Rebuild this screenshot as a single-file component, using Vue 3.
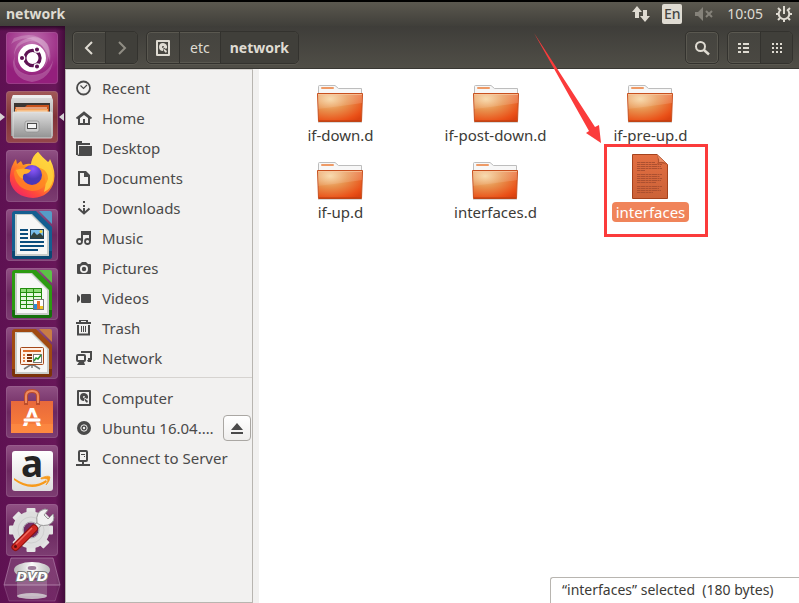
<script setup>
import { ref } from 'vue'

const selected = ref('interfaces')

const officeDoc = (edge, dark, flap, body) => `
  <path d="M9 2H27L46 21V47Q46 50 43 50H9Q6 50 6 47V5Q6 2 9 2Z" fill="${edge}"/>
  <path d="M6 42H46V47Q46 50 43 50H9Q6 50 6 47Z" fill="${dark}"/>
  <path d="M9 5H26L43 22V47H9Z" fill="#c9cdca"/>
  <path d="M11 6H25L41 22V45H11Z" fill="#f7f7f6"/>
  <path d="M26 2H30L46 18V23Z" fill="${edge}"/>
  <path d="M33 2H44Q46 2 46 4V15Z" fill="${flap}"/>${body}`

const gearTeeth = (cx, cy, r, w, h, n, fill) =>
  Array.from({ length: n }, (_, i) =>
    `<rect x="${cx - w / 2}" y="${cy - r}" width="${w}" height="${h}" rx="1" fill="${fill}" transform="rotate(${(i * 360) / n} ${cx} ${cy})"/>`
  ).join('')

const apps = [
  {
    name: 'Search your computer', kind: 'dash',
    art: `
      <path d="M5 12Q22 0 36 14Q44 25 37 37Q47 24 41 12Q30 -2 8 6Z" fill="#fff" opacity=".2"/>
      <path d="M8 25Q7 8 27 5Q47 6 44 30Q39 9 24 9Q9 12 8 25Z" fill="#fff" opacity=".22"/>
      <path d="M10 20Q4 39 23 43Q42 44 47 28Q45 47 26 50Q7 47 7 30Z" fill="#fff" opacity=".2"/>
      <circle cx="26" cy="26" r="14" fill="#fff"/>
      <circle cx="26.5" cy="26" r="7.6" fill="none" stroke="#5e1454" stroke-width="3.2"/>
      <g stroke="#fff" stroke-width="1.3" fill="#5e1454"><circle cx="16" cy="26" r="2.7"/><circle cx="31" cy="17.5" r="2.7"/><circle cx="31" cy="34.5" r="2.7"/></g>`,
  },
  {
    name: 'Files', kind: 'running',
    art: `
      <defs><linearGradient id="cab" x2="0" y2="1"><stop offset="0" stop-color="#dedede"/><stop offset="1" stop-color="#929292"/></linearGradient></defs>
      <path d="M7 4H45L47 9V45H5V9Z" fill="url(#cab)"/><path d="M7 4H45L46 7H6Z" fill="#eee"/>
      <rect x="8" y="12" width="36" height="10" fill="#3c3734"/>
      <path d="M9 16H19L21 14H43V22H9Z" fill="#c9531c"/><path d="M9 18H42V22H9Z" fill="#f3a25c"/><path d="M10 17H41" stroke="#fff1df"/><path d="M11 20H41" stroke="#fbd9ae"/>
      <rect x="7" y="21" width="39" height="26" rx="1" fill="url(#cab)" stroke="#e6e6e6" stroke-width=".8"/>
      <rect x="19" y="30" width="14" height="11" rx="2" fill="#cfcfcf" stroke="#8e8e8e" stroke-width=".7"/>
      <rect x="21.5" y="32.5" width="9" height="5" fill="#f4f4f4" stroke="#4b4b4b"/>`,
  },
  {
    name: 'Firefox', kind: 'plain',
    art: `
      <defs>
        <linearGradient id="fx" x1=".9" y1="0" x2=".2" y2="1"><stop offset="0" stop-color="#fff44f"/><stop offset=".45" stop-color="#ff9a22"/><stop offset=".75" stop-color="#ff4a3a"/><stop offset="1" stop-color="#f0216a"/></linearGradient>
        <radialGradient id="fp" cx=".55" cy=".2"><stop offset="0" stop-color="#9059ff"/><stop offset="1" stop-color="#4b37b8"/></radialGradient>
      </defs>
      <path d="M32 2Q36 7 42 12Q43 12 44 9Q50 21 48 31Q44 47 27 48Q8 47 4 31Q3 21 8 12L10 9L11 14L15 11L17 15Q22 13 25 14Q26 6 32 2Z" fill="url(#fx)"/>
      <path d="M32 2Q36 8 43 14Q48 22 47 30Q45 39 38 42Q42 30 36 22L25 15Q26 6 32 2Z" fill="#ffd53d" opacity=".8"/>
      <path d="M8 24Q8 17 16 16Q25 16 26 19Q22 22 18 24Q17 31 24 35Q34 36 36 27Q36 20 29 17Q42 18 42 29Q38 41 26 41Q10 39 8 24Z" fill="#ff8a22" opacity=".75"/>
      <circle cx="26" cy="25" r="10" fill="url(#fp)"/>
      <path d="M10 20Q17 17 25 20Q23 24 18 24Q16 26 17 29Q12 27 10 20Z" fill="#ffae2d"/>`,
  },
  {
    name: 'LibreOffice Writer', kind: 'plain',
    art: officeDoc('#155f91', '#0a4773', '#559cc7', `
      <g stroke="#0b4d7c" stroke-width="2"><path d="M14 21H22M14 25H22M14 29H22M14 33H38M14 37H38M14 41H32"/></g>
      <rect x="24.5" y="20.5" width="13" height="9" fill="#79bdea" stroke="#1f3f55"/><path d="M25 29V27L28 23L31 26L34 24L37 27V29Z" fill="#32423e"/><circle cx="35" cy="22.5" r="1.5" fill="#f2d43c"/>`),
  },
  {
    name: 'LibreOffice Calc', kind: 'plain',
    art: officeDoc('#2c9a12', '#14700b', '#5cc147', `
      <rect x="14" y="20" width="22" height="21" fill="#e4f8dd"/><rect x="14" y="20" width="22" height="4" fill="#8fdc78"/>
      <path d="M14.5 20.5H35.5V40.5H14.5ZM14 24.5H36M14 28.5H36M14 32.5H36M14 36.5H36M20.5 20V41M27.5 20V41" fill="none" stroke="#228c0d"/>
      <rect x="27.5" y="31.5" width="10" height="10" fill="#fff" stroke="#777"/><path d="M28 41V36H31V41Z" fill="#2b8fd8"/><path d="M31 41V33H34V41Z" fill="#e8702a"/><path d="M34 41V38H37V41Z" fill="#f0c322"/>`),
  },
  {
    name: 'LibreOffice Impress', kind: 'plain',
    art: officeDoc('#a04a12', '#7b3209', '#c97c45', `
      <path d="M26 37L18 42M26 37L34 42M26 37V41" stroke="#777" stroke-width="1.5"/>
      <rect x="14.5" y="20.5" width="23" height="17" rx="1" fill="#fff1e6" stroke="#a4481a"/><path d="M17 24H35" stroke="#d96a29" stroke-width="2"/>
      <path d="M17 28H19M17 31H19M17 34H19" stroke="#e07d42" stroke-width="2"/><path d="M21 28H26M21 31H26M21 34H26" stroke="#7d2f08" stroke-width="2"/>
      <rect x="27.5" y="27.5" width="8" height="8" fill="#fff" stroke="#777"/><path d="M28 34L30 31L32 32L35 28" fill="none" stroke="#22942a" stroke-width="1.5"/>`),
  },
  {
    name: 'Ubuntu Software', kind: 'plain',
    art: `
      <defs><linearGradient id="bag" x2="0" y2="1"><stop offset="0" stop-color="#e8693c"/><stop offset="1" stop-color="#fb8139"/></linearGradient></defs>
      <path d="M5 15H47V47H5Z" fill="url(#bag)"/><path d="M5 38H47V47H5Z" fill="#ff9148" opacity=".5"/>
      <path d="M20 19V10Q20 5 26 5Q32 5 32 10V19" fill="none" stroke="#bb4c2b" stroke-width="4"/><path d="M20 17V10Q20 5 26 5Q32 5 32 10V17" fill="none" stroke="#ef8b5f" stroke-width="2"/>
      <text x="26" y="40" text-anchor="middle" font-family="Lato, sans-serif" font-weight="900" font-size="25" fill="#fff">A</text>
      <rect x="17" y="32" width="18" height="4" rx="2" fill="#fff" stroke="#f07440" stroke-width=".8"/>`,
  },
  {
    name: 'Amazon', kind: 'plain',
    art: `
      <defs><linearGradient id="amz" x2="0" y2="1"><stop offset="0" stop-color="#fff"/><stop offset="1" stop-color="#dedede"/></linearGradient></defs>
      <rect x="6" y="6" width="41" height="40" rx="3" fill="url(#amz)"/>
      <text x="26" y="32" text-anchor="middle" font-family="'Noto Sans', sans-serif" font-weight="700" font-size="37" fill="#242424">a</text>
      <path d="M8 33Q25 45 40 35L41 37Q25 48 8 35Z" fill="#f79a1b"/><path d="M35 33Q42 30 44 32Q44 36 40 40Q43 35 41 34Q39 33 35 34Z" fill="#f79a1b" stroke="#f79a1b" stroke-width=".7"/>`,
  },
  {
    name: 'System Settings', kind: 'plain',
    art: `
      ${gearTeeth(25, 26, 22, 9, 9, 8, '#e4e4e4')}
      <circle cx="25" cy="26" r="13" fill="none" stroke="#dedede" stroke-width="11"/>
      <circle cx="25" cy="26" r="13" fill="none" stroke="#cfcfcf"/><circle cx="25" cy="26" r="8" fill="none" stroke="#a9a0a9"/>
      <path d="M25 28L37 16" stroke="#8d8d8d" stroke-width="6"/><path d="M25 28L37 16" stroke="#e9e9e9" stroke-width="4"/>
      <path d="M31 19Q29 7 39 5L42 6L38 11L42 15L47 10Q50 18 42 21Q37 22 34 21Z" fill="#f0f0f0" stroke="#9a9a9a"/>
      <path d="M9.5 43L28 24.5" stroke="#8d100d" stroke-width="8" stroke-linecap="round"/><path d="M9.5 43L28 24.5" stroke="#cf2823" stroke-width="6" stroke-linecap="round"/><path d="M10 40L26 24" stroke="#ef6a60" stroke-width="1.5"/><circle cx="9.5" cy="42.5" r="1.5" fill="#5e0e0c"/>`,
  },
]

const disk = `<path fill-rule="evenodd" d="M2 0H14Q15 0 15 1V15Q15 16 14 16H2Q1 16 1 15V1Q1 0 2 0ZM3 2V14H13V2Z"/><path fill-rule="evenodd" d="M8 3A4 4 0 0 1 12 8L11 9L8 7L8 11A4 4 0 0 1 8 3ZM8 6A1 1 0 0 0 8 8A1 1 0 0 0 8 6Z"/><path d="M8 8L12 11L11 13L9 11Z"/>`

const places = [
  { label: 'Recent', icon: `<circle cx="7.5" cy="8" r="6.5" fill="none" stroke="currentColor" stroke-width="1.8"/><path d="M4.5 5.5L7.5 8.5L11 5" fill="none" stroke="currentColor" stroke-width="1.2"/>` },
  { label: 'Home', icon: `<path d="M.5 8.5L8 2.5L15.500 8.500" fill="none" stroke="currentColor" stroke-width="2"/><path fill-rule="evenodd" d="M2 7L8 3L14 7V15H2ZM4 8V13H7V9H9V13H12V8L8 5Z"/>` },
  { label: 'Desktop', icon: `<path d="M0 1H6V3H14V5H2V15H0Z"/><path d="M3 6H16V15Q16 16 15 16H1Q3 15 3 13Z"/>` },
  { label: 'Documents', icon: `<path fill-rule="evenodd" d="M2 1H10L14 5V16H2ZM4 3V14H12V7H8V3Z"/><path d="M9 2V6H13Z"/>` },
  { label: 'Downloads', icon: `<path d="M7 1H9V3H7ZM7 5H9V7H7ZM7 8H9V13H7Z"/><path d="M2.5 8.5L8 13.5L13.5 8.5" fill="none" stroke="currentColor" stroke-width="2"/>` },
  { label: 'Music', icon: `<path d="M6 11V2H14V11" fill="none" stroke="currentColor" stroke-width="2"/><path d="M5 3H15V5H5Z"/><circle cx="3.5" cy="11.5" r="2.5" fill="none" stroke="currentColor" stroke-width="1.8"/><circle cx="11.5" cy="11.5" r="2.5" fill="none" stroke="currentColor" stroke-width="1.8"/>` },
  { label: 'Pictures', icon: `<path fill-rule="evenodd" d="M2 4H4L6 2H10L12 4H14Q15 4 15 5V13Q15 14 14 14H2Q1 14 1 13V5Q1 4 2 4ZM8 5A4 4 0 0 0 8 13A4 4 0 0 0 8 5Z"/><circle cx="8" cy="9" r="2.2"/>` },
  { label: 'Videos', icon: `<path d="M1 4L4 7V10L1 13Z"/><rect x="5" y="4" width="10" height="9" rx="1"/>` },
  { label: 'Trash', icon: `<path d="M3 0H12V2H15V4H0V2H3Z"/><path d="M5 1.5H10" stroke="#f2f1f0"/><path d="M2 5V14.500H13V5" fill="none" stroke="currentColor" stroke-width="2"/><path d="M5.5 6V12M7.5 6V12M9.5 6V12" stroke="currentColor"/>` },
  { label: 'Network', icon: `<path d="M6 3V2H15V9H12" fill="none" stroke="currentColor" stroke-width="2"/><path d="M11 10H15V12H12Z"/><rect x="1" y="5" width="8" height="6" rx="1" fill="none" stroke="currentColor" stroke-width="2"/><path d="M3 12H8L9 15H1Z"/>` },
]

const devices = [
  { label: 'Computer', icon: disk },
  { label: 'Ubuntu 16.04.…', eject: true, icon: `<circle cx="8" cy="8" r="7"/><circle cx="8" cy="8" r="3.2" fill="none" stroke="#f2f1f0"/><circle cx="8" cy="8" r="1.2" fill="#f2f1f0"/>` },
  { label: 'Connect to Server', icon: `<rect x="3" y="1" width="8" height="10" rx="1" fill="none" stroke="currentColor" stroke-width="2"/><path d="M5 4H9V5H5ZM8 6H9V7H8ZM6 11H8V14H14V16H0V14H6Z"/>` },
]

const files = [
  { name: 'if-down.d', folder: true },
  { name: 'if-post-down.d', folder: true },
  { name: 'if-pre-up.d', folder: true },
  { name: 'if-up.d', folder: true },
  { name: 'interfaces.d', folder: true },
  { name: 'interfaces', folder: false },
]

const textRows = [10, 12, 14, 16, 18, 22, 24, 26, 28, 30, 34, 36, 38, 40]
const rowWidth = (i) => [18, 25, 24, 25, 8, 25, 23, 25, 24, 19, 25, 22, 24, 16][i]
</script>

<template>
  <div class="desktop">
    <header class="panel">
      <strong class="title">network</strong>
      <div class="indicators">
        <svg class="net" width="18" height="18" viewBox="0 0 18 18" fill="currentColor" aria-hidden="true"><path d="M5 1L10 7H7V13H3V7H0ZM13 17L8 11H11V5H15V11H18Z" /></svg>
        <span class="lang">En</span>
        <svg class="mute" width="18" height="14" viewBox="0 0 18 14" fill="currentColor" aria-hidden="true"><path d="M0 5H3L8 0V14L3 9H0Z" /><path d="M11 4L17 10M17 4L11 10" stroke="currentColor" stroke-width="2" /></svg>
        <time>10:05</time>
        <svg width="16" height="16" viewBox="0 0 16 16" aria-hidden="true">
          <path d="M5 3.5A5.3 5.3 0 1 0 11 3.5" fill="none" stroke="currentColor" stroke-width="2" />
          <path d="M8 0V8M0 8H3M13 8H16M2 2L4 4M14 2L12 4M2 14L4 12M14 14L12 12M8 13V16" stroke="currentColor" stroke-width="2" />
        </svg>
      </div>
    </header>

    <div class="workspace">
      <nav class="launcher" aria-label="Launcher">
        <button v-for="app in apps" :key="app.name" type="button" class="tile" :class="app.kind" :aria-label="app.name">
          <svg width="52" height="52" viewBox="0 0 52 52" aria-hidden="true" v-html="app.art"></svg>
        </button>
        <button type="button" class="dvd" aria-label="DVD">
          <svg width="60" height="44" viewBox="0 0 60 44" aria-hidden="true">
            <defs><linearGradient id="disc"><stop offset="0" stop-color="#b9b9b9" /><stop offset=".5" stop-color="#fafafa" /><stop offset="1" stop-color="#bcbcbc" /></linearGradient></defs>
            <path d="M9 0H51L58 27H2Z" fill="#fff" fill-opacity=".16" stroke="#b98cb2" stroke-opacity=".6" />
            <path d="M2 27H58L53 43H7Z" fill="#fff" fill-opacity=".08" stroke="#b98cb2" stroke-opacity=".3" />
            <path d="M15 22H45V38H15Z" fill="#ddd" opacity=".25" />
            <ellipse cx="30" cy="38" rx="15" ry="3" fill="#d8d8d8" opacity=".8" />
            <ellipse cx="30" cy="12" rx="18" ry="8" fill="url(#disc)" /><ellipse cx="30" cy="10" rx="5" ry="2.5" fill="#9d7d9a" stroke="#fff" />
            <text x="30" y="23" text-anchor="middle" font-family="'DejaVu Sans', sans-serif" font-weight="700" font-style="italic" font-size="13" fill="#fff" stroke="#777" stroke-width="2" paint-order="stroke">DVD</text>
          </svg>
        </button>
      </nav>

      <main class="window">
        <div class="toolbar">
          <div class="group">
            <button type="button" class="square" aria-label="Back"><svg width="16" height="16" viewBox="0 0 16 16" aria-hidden="true"><path d="M11 2L5 8L11 14" fill="none" stroke="currentColor" stroke-width="2" /></svg></button>
            <button type="button" class="square pressed dim" aria-label="Forward"><svg width="16" height="16" viewBox="0 0 16 16" aria-hidden="true"><path d="M5 2L11 8L5 14" fill="none" stroke="currentColor" stroke-width="2" /></svg></button>
          </div>
          <div class="group path">
            <button type="button" class="square" aria-label="Computer"><svg width="16" height="16" viewBox="0 0 16 16" fill="currentColor" aria-hidden="true" v-html="disk"></svg></button>
            <button type="button" class="crumb">etc</button>
            <button type="button" class="crumb pressed current">network</button>
          </div>
          <div class="group search">
            <button type="button" class="square" aria-label="Search"><svg width="16" height="16" viewBox="0 0 16 16" aria-hidden="true"><circle cx="6.5" cy="6.5" r="4.5" fill="none" stroke="currentColor" stroke-width="2" /><path d="M10 10L15 14.5" stroke="currentColor" stroke-width="2.5" /></svg></button>
          </div>
          <div class="group">
            <button type="button" class="square" aria-label="List view"><svg width="16" height="16" viewBox="0 0 16 16" fill="currentColor" aria-hidden="true"><path d="M2 3H5V5H2ZM7 3H13V5H7ZM2 7H5V9H2ZM7 7H13V9H7ZM2 11H5V13H2ZM7 11H13V13H7Z" /></svg></button>
            <button type="button" class="square pressed" aria-label="Icon view"><svg width="16" height="16" viewBox="0 0 16 16" fill="currentColor" aria-hidden="true"><path d="M3 3H5V5H3ZM7 3H9V5H7ZM11 3H13V5H11ZM3 7H5V9H3ZM7 7H9V9H7ZM11 7H13V9H11ZM3 11H5V13H3ZM7 11H9V13H7ZM11 11H13V13H11Z" /></svg></button>
          </div>
        </div>

        <div class="body">
          <aside class="sidebar">
            <a v-for="p in places" :key="p.label" href="#" class="place">
              <svg width="16" height="16" viewBox="0 0 16 16" fill="currentColor" aria-hidden="true" v-html="p.icon"></svg>
              <span>{{ p.label }}</span>
            </a>
            <hr />
            <div v-for="d in devices" :key="d.label" class="device">
              <a href="#" class="place">
                <svg width="16" height="16" viewBox="0 0 16 16" fill="currentColor" aria-hidden="true" v-html="d.icon"></svg>
                <span>{{ d.label }}</span>
              </a>
              <button v-if="d.eject" type="button" class="eject" aria-label="Eject">
                <svg width="12" height="11" viewBox="0 0 12 11" fill="currentColor" aria-hidden="true"><path d="M6 0L12 7H0ZM0 9H12V11H0Z" /></svg>
              </button>
            </div>
          </aside>

          <section class="content">
            <div class="files">
              <div v-for="f in files" :key="f.name" class="cell">
                <button type="button" class="file" :class="{ selected: selected === f.name }" @click="selected = f.name">
                  <svg v-if="f.folder" width="48" height="48" viewBox="0 0 48 48" aria-hidden="true">
                    <defs>
                      <radialGradient id="folder" cx=".28" cy=".2" r=".95"><stop offset="0" stop-color="#f6d29c" /><stop offset=".4" stop-color="#e89450" /><stop offset=".85" stop-color="#ea5118" /><stop offset="1" stop-color="#dc4310" /></radialGradient>
                      <linearGradient id="gloss" x2="0" y2="1"><stop offset="0" stop-color="#fff" stop-opacity=".25" /><stop offset="1" stop-color="#fff" stop-opacity=".08" /></linearGradient>
                    </defs>
                    <path d="M2 47H46" stroke="#000" stroke-opacity=".15" stroke-width="2" />
                    <path d="M2.5 20V11.5Q2.5 10.5 3.5 10.5H19L22.5 13.5H45.5V20Z" fill="#f7f7f7" stroke="#bdbdbd" />
                    <rect x="5" y="12" width="13" height="2" rx="1" fill="#ee9a66" />
                    <path d="M1.5 18.5H46.5L45.5 46.5H2.5Z" fill="url(#folder)" stroke="#c7501f" />
                    <path d="M2 19H46V28Q26 31 2 34Z" fill="url(#gloss)" /><path d="M2 19.5H46" stroke="#f9c9a0" stroke-opacity=".7" /><path d="M3 46H45" stroke="#b83a10" />
                  </svg>
                  <svg v-else width="48" height="48" viewBox="0 0 48 48" aria-hidden="true">
                    <defs><linearGradient id="paper" x2="0" y2="1"><stop offset="0" stop-color="#e36f42" /><stop offset="1" stop-color="#cb6238" /></linearGradient></defs>
                    <path d="M6.5 2.5H31L41.5 12.5V46.5H6.5Z" fill="url(#paper)" stroke="#a5421c" />
                    <path d="M31 3Q33 10 31 12Q37 10 41 13Z" fill="#8f3d1d" opacity=".55" /><path d="M31 3Q34 8 33 10Q38 9 41 12Z" fill="#ee9068" />
                    <path v-for="(y, i) in textRows" :key="y" :d="`M11 ${y + 0.5}H${11 + rowWidth(i)}`" stroke="#ac5030" stroke-dasharray="3 .5 5 .5 2 .5" />
                  </svg>
                  <span class="name">{{ f.name }}</span>
                </button>
                <template v-if="f.name === 'interfaces'">
                  <span class="marker"></span>
                  <svg class="pointer" width="70" height="114" viewBox="0 0 70 114" fill="#fb3b3b" aria-hidden="true"><path d="M1 1L62 95L66 93L68 111L53 101L56 99Z" /></svg>
                </template>
              </div>
            </div>
            <div class="status" role="status">“interfaces” selected&nbsp; (180 bytes)</div>
          </section>
        </div>
      </main>
    </div>
  </div>
</template>

<style>
body {
  background: #000;
}
</style>

<style scoped>
.desktop {
  box-sizing: border-box;
  min-height: 100vh;
  display: flex;
  flex-direction: column;
  padding: 2px 0 1px;
  background: #000;
  color: #3c3b37;
  font: 14px/20px "Noto Sans", "Open Sans", sans-serif;
}
button {
  margin: 0;
  padding: 0;
  border: 0;
  background: none;
  color: inherit;
  font: inherit;
}
svg {
  display: block;
  flex: none;
  overflow: visible;
}
.panel {
  display: flex;
  align-items: center;
  justify-content: space-between;
  height: 24px;
  padding: 0 7px 0 6px;
  background: linear-gradient(#5b584f, #403f3a);
  color: #dfdbd2;
}
.indicators {
  display: flex;
  align-items: center;
}
.lang {
  width: 20px;
  margin: 0 13px 0 12px;
  border-radius: 2px;
  background: #dfdbd2;
  color: #45443f;
  font-weight: 500;
  text-align: center;
}
.mute {
  margin-right: 14px;
  color: #85827a;
}
time {
  margin-right: 13px;
}
.workspace {
  flex: 1;
  display: flex;
}
.launcher {
  flex: none;
  box-sizing: border-box;
  width: 65px;
  display: flex;
  flex-direction: column;
  align-items: center;
  gap: 7px;
  padding: 6px 1px 1px 0;
  background: linear-gradient(#2d0828, transparent 5px), linear-gradient(90deg, #5e1152, #681759 85%, #430b3b);
}
.tile {
  position: relative;
  width: 52px;
  height: 52px;
  border-radius: 4px;
  background: linear-gradient(#915184, #6c2860 50%, #7d3d72);
  box-shadow: inset 0 0 0 1px #a774a055;
}
.tile.dash {
  background: radial-gradient(circle at 50% 20%, #c070b0, #941f7c 70%);
}
.tile.running {
  background: linear-gradient(#a25a58, #803238 50%, #95464a);
}
.running::before,
.running::after {
  content: "";
  position: absolute;
  top: 22px;
  border: 4px solid transparent;
}
.running::before {
  left: -6px;
  border-left: 5px solid #d8d4d6;
  border-right: 0;
}
.running::after {
  right: -6px;
  border-right: 5px solid #d8d4d6;
  border-left: 0;
}
.dvd {
  margin-top: -5px;
}
.window {
  flex: 1;
  min-width: 0;
  display: flex;
  flex-direction: column;
}
.toolbar {
  display: flex;
  gap: 8px;
  padding: 5px 6px 4px 7px;
  border-bottom: 1px solid #383733;
  background: linear-gradient(#3e3d39, #504e47);
  color: #dfdbd2;
}
.group {
  display: flex;
  box-sizing: border-box;
  height: 33px;
  border: 1px solid #33322e;
  border-radius: 5px;
  background: linear-gradient(#45443f, #4a4842);
  box-shadow: inset 0 0 0 1px #5a5850, 0 1px #5a5850;
  overflow: hidden;
}
.group button {
  display: flex;
  align-items: center;
  justify-content: center;
}
.group button + button {
  border-left: 1px solid #33322e;
}
.square {
  width: 32px;
}
.crumb {
  padding: 0 10px;
}
.current {
  padding: 0 9px;
  font-weight: 700;
}
.pressed {
  background: #403f3a;
}
.dim {
  color: #908d84;
}
.search {
  margin-left: auto;
}
.body {
  flex: 1;
  display: flex;
  background: #f2f1f0;
}
.sidebar {
  flex: none;
  box-sizing: border-box;
  width: 188px;
  margin-right: 6px;
  padding-top: 3px;
  border: 1px solid #b8b5b0;
  border-top-color: #d5d2ce;
}
.place {
  flex: 1;
  min-width: 0;
  display: flex;
  align-items: center;
  gap: 10px;
  height: 30px;
  padding-left: 10px;
  color: #4a4a4a;
  font-size: 15px;
  text-decoration: none;
  white-space: nowrap;
}
hr {
  height: 1px;
  margin: 4px 0 5px;
  border: 0;
  background: #d6d3d0;
}
.device {
  display: flex;
  align-items: center;
}
.eject {
  display: flex;
  align-items: center;
  justify-content: center;
  box-sizing: border-box;
  width: 28px;
  height: 26px;
  margin-right: 1px;
  border: 1px solid #aaa7a3;
  border-radius: 4px;
  background: linear-gradient(#fff, #efeeed);
  color: #4a4a4a;
}
.content {
  flex: 1;
  min-width: 0;
  display: flex;
  flex-direction: column;
  justify-content: space-between;
  background: #fff;
}
.files {
  display: grid;
  grid-template-columns: repeat(auto-fill, 155px);
  row-gap: 7px;
  padding: 6px 0 6px 4px;
}
.cell {
  position: relative;
  display: flex;
  justify-content: center;
}
.file {
  display: flex;
  flex-direction: column;
  align-items: center;
  gap: 2px;
}
.name {
  padding: 0 4px;
  border-radius: 4px;
  font-size: 15px;
}
.selected .name {
  background: #f0845a;
  color: #fff;
}
.marker {
  position: absolute;
  top: -8px;
  left: 50%;
  box-sizing: border-box;
  width: 104px;
  height: 93px;
  margin-left: -47px;
  border: 3px solid #fb3b3b;
  pointer-events: none;
}
.pointer {
  position: absolute;
  top: -120px;
  right: 50%;
  margin-right: 48px;
  pointer-events: none;
}
.status {
  align-self: flex-end;
  box-sizing: border-box;
  min-width: 249px;
  padding: 2px 16px 3px 11px;
  border: 1px solid #b8b5b0;
  border-width: 1px 0 0 1px;
  border-top-left-radius: 3px;
}
</style>
